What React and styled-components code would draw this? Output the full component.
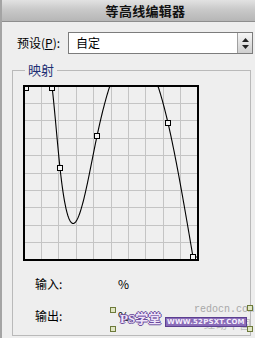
import React from 'react';
import styled, { createGlobalStyle } from 'styled-components';

const GlobalStyle = createGlobalStyle`
  html, body { margin: 0; padding: 0; background: #eeeeee; }
  body { font-family: "Noto Sans CJK SC", "Noto Sans", sans-serif; }
`;

const Window = styled.div`
  position: relative;
  width: 255px;
  height: 338px;
  overflow: hidden;
  box-sizing: border-box;
  background: #eeeeee;
  border-left: 2px solid #a4a4a4;
  display: flex;
  flex-direction: column;
`;

const TitleBar = styled.div`
  height: 22px;
  box-sizing: border-box;
  flex: none;
  border-bottom: 1px solid #8e8e8e;
  background: linear-gradient(#e2e2e2 0%, #c9c9c9 45%, #b6b6b6 100%);
  display: flex;
  align-items: center;
  justify-content: center;
  padding-left: 34px;
  font-size: 13px;
  font-weight: 700;
  color: #111;
  letter-spacing: 0.3px;
`;

const PresetRow = styled.div`
  display: flex;
  align-items: center;
  margin-top: 10px;
  padding-left: 15px;
  height: 22px;
  flex: none;
`;

const Label = styled.span`
  width: 51px;
  font-size: 12px;
  line-height: 14px;
  color: #000;
`;

const Key = styled.span`
  text-decoration: underline;
`;

const SelectBox = styled.div`
  width: 185px;
  height: 22px;
  box-sizing: border-box;
  border: 1px solid #7c7c7c;
  background: #fff;
  display: flex;
`;

const SelectText = styled.span`
  flex: 1;
  padding-left: 7px;
  font-size: 12px;
  line-height: 20px;
  color: #000;
`;

const SpinButton = styled.div`
  width: 14px;
  border-left: 1px solid #a0a0a0;
  background: linear-gradient(#f6f6f6, #cfcfcf);
  display: flex;
  align-items: center;
  justify-content: center;
`;

const Group = styled.fieldset`
  margin: 9px 4px 0 10px;
  padding: 0 0 0 10px;
  height: 273px;
  box-sizing: border-box;
  border: 1px solid #b9b9b9;
  min-width: 0;
`;

const Legend = styled.legend`
  margin-left: 2px;
  padding: 0 3px;
  font-size: 13px;
  line-height: 14px;
  color: #1f2f74;
`;

const GraphWrap = styled.div`
  margin-top: 8px;
  width: 176px;
  height: 176px;
`;

const ValueRow = styled.div`
  display: flex;
  height: 14px;
  margin-top: ${(p) => p.$top}px;
  padding-left: 12px;
  font-size: 12px;
  line-height: 14px;
  color: #000;
`;

const ValueLabel = styled.span`
  width: 83px;
`;

const Watermark = styled.div`
  position: absolute;
  left: 106px;
  top: 304px;
  width: 146px;
  height: 30px;
  pointer-events: none;
`;

const Redocn = styled.span`
  position: absolute;
  left: 86px;
  top: 1px;
  font-family: "Liberation Mono", monospace;
  font-size: 10px;
  line-height: 10px;
  color: #a8a8a8;
`;

const Hongdong = styled.span`
  position: absolute;
  left: 96px;
  top: 14px;
  font-size: 11px;
  line-height: 12px;
  color: #b8b8b8;
  letter-spacing: 1px;
`;

const PsText = styled.span`
  position: absolute;
  left: 12px;
  top: 8px;
  font-family: "Liberation Serif", "Noto Sans CJK SC", serif;
  font-size: 13px;
  line-height: 14px;
  font-weight: 700;
  color: #eee4fa;
  text-shadow: -1px 0 #6a4a9c, 1px 0 #6a4a9c, 0 -1px #6a4a9c, 0 1px #6a4a9c;
`;

const SiteText = styled.span`
  position: absolute;
  left: 57px;
  top: 13px;
  padding: 0 1px;
  font-family: "DejaVu Sans", sans-serif;
  font-size: 7px;
  line-height: 8px;
  font-weight: 700;
  color: #f4eefc;
  background: #8a6cb8;
  border: 1px solid #5b3f8f;
  letter-spacing: 0.2px;
`;

const Corner = styled.span`
  position: absolute;
  left: ${(p) => p.$x}px;
  top: ${(p) => p.$y}px;
  width: 4px;
  height: 4px;
  border: 1px solid #6d7a3a;
  background: #e0e6c4;
`;

// natural cubic spline through control points (graph-local px, y down)
const PTS = [
  [3, 1],
  [29, 1],
  [37, 83],
  [74, 51],
  [145, 38],
  [170, 172],
];

function buildCurve(pts) {
  const n = pts.length;
  const xs = pts.map((p) => p[0]);
  const ys = pts.map((p) => p[1]);
  const h = [];
  for (let i = 0; i < n - 1; i++) h.push(xs[i + 1] - xs[i]);
  const a = new Array(n).fill(0);
  const b = new Array(n).fill(1);
  const c = new Array(n).fill(0);
  const d = new Array(n).fill(0);
  for (let i = 1; i < n - 1; i++) {
    a[i] = h[i - 1];
    b[i] = 2 * (h[i - 1] + h[i]);
    c[i] = h[i];
    d[i] = 6 * ((ys[i + 1] - ys[i]) / h[i] - (ys[i] - ys[i - 1]) / h[i - 1]);
  }
  for (let i = 1; i < n; i++) {
    const m = a[i] / b[i - 1];
    b[i] -= m * c[i - 1];
    d[i] -= m * d[i - 1];
  }
  const M = new Array(n).fill(0);
  M[n - 1] = d[n - 1] / b[n - 1];
  for (let i = n - 2; i >= 0; i--) M[i] = (d[i] - c[i] * M[i + 1]) / b[i];
  M[0] = 0;
  M[n - 1] = 0;

  const evalAt = (x) => {
    if (x <= xs[0]) return ys[0];
    if (x >= xs[n - 1]) return ys[n - 1];
    let i = 0;
    while (i < n - 2 && x > xs[i + 1]) i++;
    const x0 = xs[i];
    const x1 = xs[i + 1];
    const hh = h[i];
    return (
      (M[i] * Math.pow(x1 - x, 3)) / (6 * hh) +
      (M[i + 1] * Math.pow(x - x0, 3)) / (6 * hh) +
      (ys[i] / hh - (M[i] * hh) / 6) * (x1 - x) +
      (ys[i + 1] / hh - (M[i + 1] * hh) / 6) * (x - x0)
    );
  };

  let dstr = '';
  for (let x = 1; x <= 175; x += 0.5) {
    const y = Math.min(174.5, Math.max(1.5, evalAt(x)));
    dstr += (dstr ? ' L' : 'M') + x.toFixed(1) + ' ' + y.toFixed(2);
  }
  return dstr;
}

const CURVE = buildCurve(PTS);

function Graph() {
  const lines = [];
  for (let i = 1; i < 10; i++) {
    const p = 1 + i * 17.4;
    lines.push(<line key={'v' + i} x1={p} y1={1} x2={p} y2={175} />);
    lines.push(<line key={'h' + i} x1={1} y1={p} x2={175} y2={p} />);
  }
  return (
    <svg width="176" height="176" viewBox="0 0 176 176">
      <rect x="1" y="1" width="174" height="174" fill="#efefef" />
      <g stroke="#c4c4c4" strokeWidth="1" shapeRendering="crispEdges">
        {lines}
      </g>
      <path d={CURVE} fill="none" stroke="#000" strokeWidth="1.1" />
      <g fill="#f4f4f4" stroke="#000" strokeWidth="1" shapeRendering="crispEdges">
        {PTS.map(([x, y], i) => (
          <rect key={i} x={Math.round(x) - 2.5} y={Math.min(171.5, Math.max(0.5, Math.round(y) - 2.5))} width="5" height="5" />
        ))}
      </g>
      <rect x="1" y="1" width="174" height="174" fill="none" stroke="#000" strokeWidth="2" />
    </svg>
  );
}

export default function App() {
  return (
    <>
      <GlobalStyle />
      <Window>
        <TitleBar>等高线编辑器</TitleBar>
        <PresetRow>
          <Label>
            预设(<Key>P</Key>):
          </Label>
          <SelectBox>
            <SelectText>自定</SelectText>
            <SpinButton>
              <svg width="7" height="11" viewBox="0 0 7 11">
                <path d="M3.5 0 L7 4 L0 4 Z M0 7 L7 7 L3.5 11 Z" fill="#222" />
              </svg>
            </SpinButton>
          </SelectBox>
        </PresetRow>
        <Group>
          <Legend>映射</Legend>
          <GraphWrap>
            <Graph />
          </GraphWrap>
          <ValueRow $top={16}>
            <ValueLabel>输入:</ValueLabel>
            <span>%</span>
          </ValueRow>
          <ValueRow $top={18}>
            <ValueLabel>输出:</ValueLabel>
            <span>%</span>
          </ValueRow>
        </Group>
        <Watermark>
          <Redocn>redocn.com</Redocn>
          <Hongdong>红动中国</Hongdong>
          <Corner $x={2} $y={3} />
          <Corner $x={2} $y={22} />
          <Corner $x={139} $y={1} />
          <Corner $x={139} $y={22} />
          <PsText>PS学堂</PsText>
          <SiteText>WWW.52PSXT.COM</SiteText>
        </Watermark>
      </Window>
    </>
  );
}
